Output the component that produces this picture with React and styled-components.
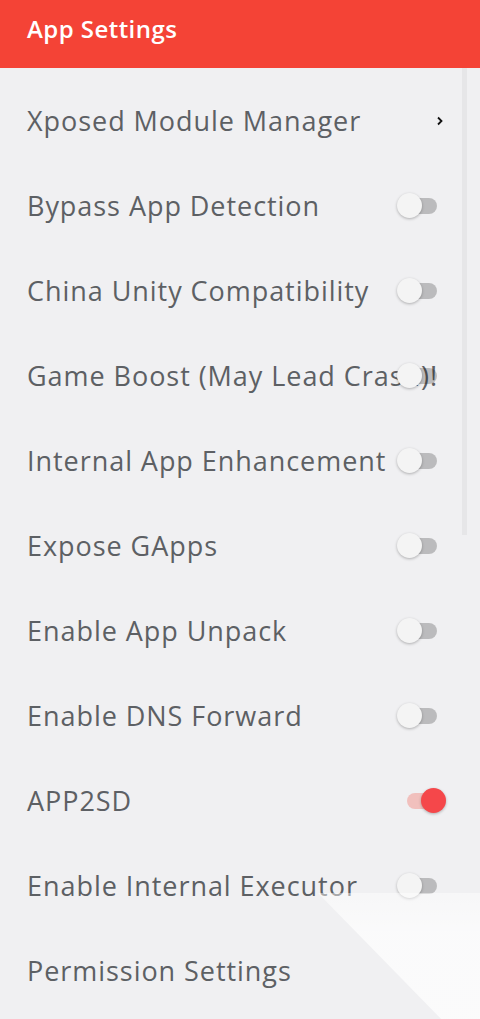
import React from "react";
import styled, { createGlobalStyle } from "styled-components";

const Global = createGlobalStyle`
  html, body { margin: 0; padding: 0; background: #f0f0f2; }
  body { font-family: "Open Sans", "Noto Sans", sans-serif; }
`;

const Page = styled.div`
  position: relative;
  width: 480px;
  height: 1019px;
  overflow: hidden;
  background: #f0f0f2;
`;

const Header = styled.header`
  height: 68px;
  background: #f44336;
  display: flex;
  align-items: center;
  padding: 0 27px 11px;
  box-sizing: border-box;
`;

const Title = styled.h1`
  margin: 0;
  color: #fff;
  font-size: 24px;
  font-weight: 600;
  letter-spacing: 0.45px;
`;

const List = styled.div`
  display: flex;
  flex-direction: column;
  padding-top: 10px;
`;

const Row = styled.div`
  height: 85px;
  display: flex;
  align-items: center;
  padding: 0 34px 0 27px;
  box-sizing: border-box;
`;

const Label = styled.span`
  flex: 1;
  min-width: 0;
  white-space: nowrap;
  font-size: 27px;
  color: #5d6064;
  letter-spacing: 0.95px;
`;

const Chevron = styled.svg`
  flex-shrink: 0;
  width: 8px;
  height: 10px;
  margin-right: 2px;
`;

const Switch = styled.div`
  position: relative;
  flex-shrink: 0;
  width: 40px;
  height: 26px;
  margin-right: 9px;
`;

const Track = styled.div`
  position: absolute;
  left: 10px;
  right: 0;
  top: 5px;
  height: 16px;
  border-radius: 8px;
  background: ${(p) => (p.$on ? "rgba(244, 67, 54, 0.28)" : "rgba(0, 0, 0, 0.22)")};
`;

const Thumb = styled.div`
  position: absolute;
  top: 0;
  left: ${(p) => (p.$on ? "24px" : "0")};
  width: 25px;
  height: 25px;
  border-radius: 50%;
  background: ${(p) => (p.$on ? "#f5474a" : "#f4f4f4")};
  box-shadow: 0 1px 3px rgba(0, 0, 0, 0.28);
`;

const ScrollIndicator = styled.div`
  position: absolute;
  left: 462px;
  top: 68px;
  width: 5px;
  height: 467px;
  background: #e6e6e8;
`;

const Fade = styled.div`
  position: absolute;
  left: 318px;
  top: 893px;
  right: 0;
  bottom: 0;
  pointer-events: none;
  clip-path: polygon(0 0, 100% 0, 100% 100%, 76% 100%);
  background: linear-gradient(to bottom, rgba(255,255,255,0.45) 0%, rgba(255,255,255,0.7) 30%, rgba(255,255,255,0.72) 100%);
`;

const items = [
  { label: "Xposed Module Manager", type: "link" },
  { label: "Bypass App Detection", type: "switch" },
  { label: "China Unity Compatibility", type: "switch" },
  { label: "Game Boost (May Lead Crash)!", type: "switch" },
  { label: "Internal App Enhancement", type: "switch" },
  { label: "Expose GApps", type: "switch" },
  { label: "Enable App Unpack", type: "switch" },
  { label: "Enable DNS Forward", type: "switch" },
  { label: "APP2SD", type: "switch", on: true },
  { label: "Enable Internal Executor", type: "switch" },
  { label: "Permission Settings", type: "none" },
];

export default function App() {
  return (
    <Page>
      <Global />
      <Header>
        <Title>App Settings</Title>
      </Header>
      <List>
        {items.map((it) => (
          <Row key={it.label}>
            <Label>{it.label}</Label>
            {it.type === "link" && (
              <Chevron viewBox="0 0 8 10">
                <path d="M2 1.5 L5.5 5 L2 8.5" fill="none" stroke="#111" strokeWidth="1.8" />
              </Chevron>
            )}
            {it.type === "switch" && (
              <Switch>
                <Track $on={it.on} />
                <Thumb $on={it.on} />
              </Switch>
            )}
          </Row>
        ))}
      </List>
      <ScrollIndicator />
      <Fade />
    </Page>
  );
}
